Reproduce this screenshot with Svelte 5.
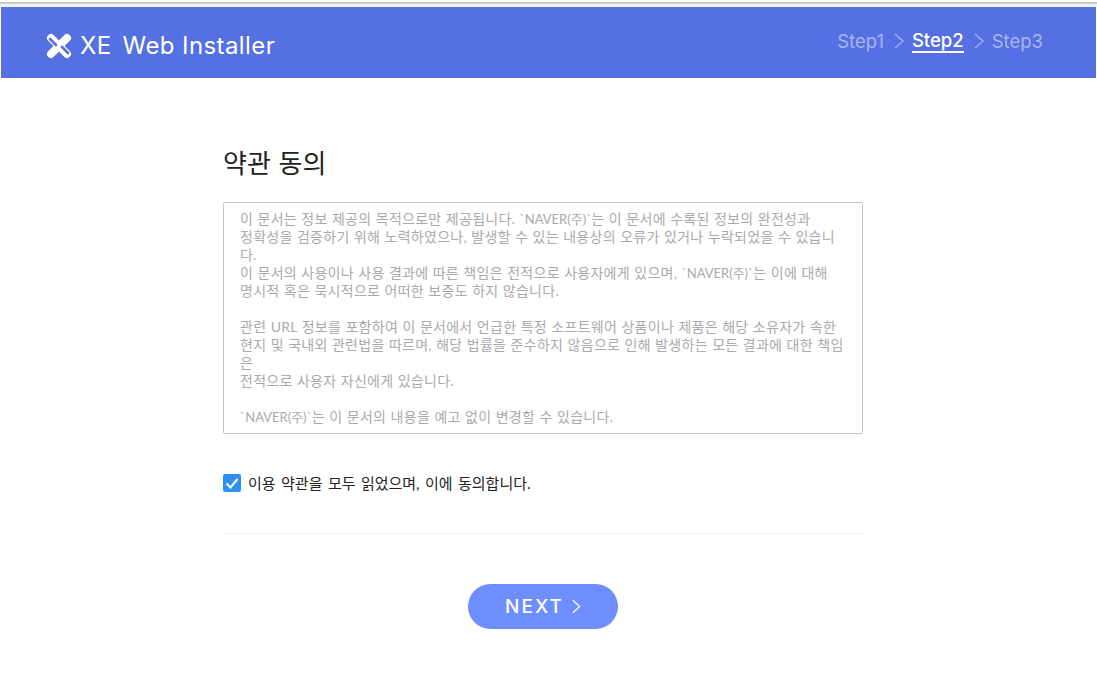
<script>
	const steps = ['Step1', 'Step2', 'Step3'];
	const vendor = '`NAVER(주)`';
	const terms = `이 문서는 정보 제공의 목적으로만 제공됩니다. ${vendor}는 이 문서에 수록된 정보의 완전성과
정확성을 검증하기 위해 노력하였으나, 발생할 수 있는 내용상의 오류가 있거나 누락되었을 수 있습니
다.
이 문서의 사용이나 사용 결과에 따른 책임은 전적으로 사용자에게 있으며, ${vendor}는 이에 대해
명시적 혹은 묵시적으로 어떠한 보증도 하지 않습니다.

관련 URL 정보를 포함하여 이 문서에서 언급한 특정 소프트웨어 상품이나 제품은 해당 소유자가 속한
현지 및 국내외 관련법을 따르며, 해당 법률을 준수하지 않음으로 인해 발생하는 모든 결과에 대한 책임
은
전적으로 사용자 자신에게 있습니다.

${vendor}는 이 문서의 내용을 예고 없이 변경할 수 있습니다.`;
</script>

<div class="top-line"></div>
<header class="header">
	<div class="brand">
		<svg class="logo" viewBox="0 0 26 26" width="26" height="26" aria-hidden="true">
			<path d="M21 5 L5 21" stroke="#fff" stroke-width="8" stroke-linecap="round" fill="none" />
			<path d="M5 5 L21 21" stroke="#fff" stroke-width="8" stroke-linecap="round" fill="none" />
			<path d="M4 6 L10 12" stroke="#5470e2" stroke-width="2.6" stroke-linecap="round" fill="none" />
			<path d="M22 20 L16 14" stroke="#5470e2" stroke-width="2.6" stroke-linecap="round" fill="none" />
		</svg>
		<span class="xe">XE</span>
		<span class="title">Web Installer</span>
	</div>
	<nav class="steps">
		{#each steps as step, i}
			{#if i > 0}
				<svg class="chevron" viewBox="0 0 10 16" width="10" height="16" aria-hidden="true">
					<path d="M1 1 L9 8 L1 15" stroke="#a9b7f0" stroke-width="1.2" fill="none" />
				</svg>
			{/if}
			<span class="step" class:active={i === 1}>{step}</span>
		{/each}
	</nav>
</header>

<div class="page">
	<main class="content">
		<h1 class="heading">약관 동의</h1>
		<div class="terms">{#each terms.split(vendor) as part, i}{#if i > 0}<span class="vendor">{vendor}</span>{/if}{part}{/each}</div>
		<label class="agree">
			<span class="check">
				<svg viewBox="0 0 18 18" width="18" height="18" aria-hidden="true">
					<path d="M3.5 9.5 L7.5 13.5 L14.5 5" stroke="#fff" stroke-width="2" fill="none" />
				</svg>
			</span>
			<span>이용 약관을 모두 읽었으며, 이에 동의합니다.</span>
		</label>
		<hr class="divider" />
		<div class="actions">
			<button class="next">
				<span class="next-label">NEXT</span>
				<svg viewBox="0 0 10 16" width="9" height="15" aria-hidden="true">
					<path d="M1 1 L8.5 8 L1 15" stroke="#fff" stroke-width="1.4" fill="none" />
				</svg>
			</button>
		</div>
	</main>
</div>

<style>
	:global(body) {
		background: #fff;
		font-family: Lato, 'Noto Sans CJK KR', sans-serif;
	}

	.top-line {
		height: 7px;
		box-sizing: border-box;
		border-top: 2px solid #fff;
		background: linear-gradient(#ccc 0 2px, #f4f4f4 2px);
	}

	.header {
		height: 71px;
		margin: 0 1px;
		background: #5470e2;
		display: flex;
		align-items: center;
		justify-content: space-between;
		padding: 0 53px 0 45px;
	}

	.brand {
		display: flex;
		align-items: center;
		color: #fff;
		font-family: Inter, Lato, sans-serif;
		font-size: 24px;
		letter-spacing: 0.4px;
		padding-top: 6px;
	}

	.logo {
		margin-right: 8px;
	}

	.xe {
		margin-right: 11px;
	}

	.steps {
		display: flex;
		align-items: center;
		gap: 10px;
		font-family: Inter, Lato, sans-serif;
		font-size: 18.5px;
		color: #a9b7f0;
		padding-bottom: 4px;
	}

	.chevron {
		margin-right: -2px;
	}

	.step.active {
		color: #fff;
		font-weight: 500;
		border-bottom: 2px solid #fff;
		line-height: 22px;
	}

	.page {
		padding-right: 11px;
	}

	.content {
		width: 640px;
		margin: 0 auto;
		padding-top: 66px;
	}

	.heading {
		margin: 0 0 20px;
		font-size: 26px;
		font-weight: 400;
		line-height: 38px;
		word-spacing: 1px;
		color: #222;
	}

	.terms {
		box-sizing: border-box;
		height: 232px;
		border: 1px solid #c4c4c4;
		border-radius: 2px;
		padding: 7px 16px 0;
		overflow: hidden;
		white-space: pre;
		font-size: 14px;
		line-height: 18px;
		letter-spacing: 0.27px;
		word-spacing: 0.5px;
		color: #aaa;
	}

	.vendor {
		font-size: 13px;
		letter-spacing: 0;
	}

	.agree {
		display: flex;
		align-items: center;
		gap: 7px;
		margin-top: 40px;
		font-size: 15px;
		line-height: 18px;
		word-spacing: 1.6px;
		color: #222;
	}

	.check {
		width: 18px;
		height: 18px;
		border-radius: 2px;
		background: #2f8ff0;
		display: flex;
	}

	.divider {
		margin: 41px 0 0;
		border: 0;
		border-top: 1px solid #eee;
	}

	.actions {
		display: flex;
		justify-content: center;
		margin-top: 50px;
	}

	.next {
		width: 150px;
		height: 45px;
		border: 0;
		border-radius: 23px;
		background: #6e8efe;
		color: #fff;
		font-family: Inter, Lato, sans-serif;
		font-size: 19px;
		font-weight: 500;
		letter-spacing: 2px;
		display: flex;
		align-items: center;
		justify-content: center;
		gap: 8px;
	}

	.next-label {
		margin-top: -1px;
	}
</style>
